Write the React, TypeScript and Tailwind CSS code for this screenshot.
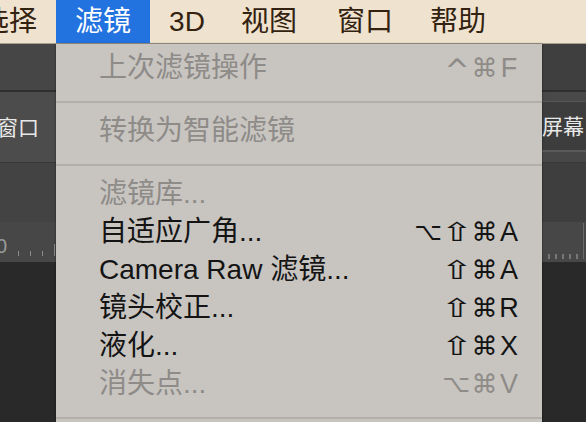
import React from "react";

const CJK = '"Liberation Sans", "Noto Sans CJK SC", sans-serif';
const SYM = '"DejaVu Sans", "Liberation Sans", sans-serif';

type Item = { label: string; keys?: string[]; disabled?: boolean };

function Key({ k, isLetter }: { k: string; isLetter: boolean }) {
  if (isLetter) {
    return (
      <span className="inline-block w-[22px] text-center text-[27px] leading-none" style={{ fontFamily: CJK }}>
        {k}
      </span>
    );
  }
  if (k === "⇧") {
    return (
      <span className="inline-block w-[28px] text-center text-[26px] leading-none" style={{ fontFamily: SYM }}>
        <span className="inline-block scale-x-[1.5]">{k}</span>
      </span>
    );
  }
  if (k === "⌥") {
    return (
      <span className="inline-block w-[30px] text-center text-[24px] leading-none" style={{ fontFamily: SYM }}>
        {k}
      </span>
    );
  }
  if (k === "^") {
    return (
      <span className="inline-block w-[28px] text-center text-[30px] leading-none translate-y-[3px]" style={{ fontFamily: SYM }}>
        {k}
      </span>
    );
  }
  return (
    <span className="inline-block w-[27px] text-center text-[26px] leading-none" style={{ fontFamily: SYM }}>
      {k}
    </span>
  );
}

function Shortcut({ keys, disabled }: { keys: string[]; disabled?: boolean }) {
  return (
    <div className={`flex items-center ${disabled ? "text-[#8e8b88]" : "text-[#141414]"}`}>
      {keys.map((k, i) => (
        <Key key={i} k={k} isLetter={i === keys.length - 1} />
      ))}
    </div>
  );
}

function Row({ item }: { item: Item }) {
  return (
    <div className="h-[38px] flex items-center justify-between pl-[43px] pr-[22px]">
      <span
        className={`text-[28px] leading-none ${item.disabled ? "text-[#8e8b88]" : "text-[#141414]"}`}
        style={{ fontFamily: CJK }}
      >
        {item.label}
      </span>
      {item.keys && <Shortcut keys={item.keys} disabled={item.disabled} />}
    </div>
  );
}

function Sep() {
  return (
    <div className="h-[25px] pt-[14px]">
      <div className="h-[2px] bg-[#b2aeaa]" />
    </div>
  );
}

export default function App() {
  return (
    <div className="w-[586px] h-[422px] overflow-hidden bg-[#292929] flex flex-col" style={{ fontFamily: CJK }}>
      {/* Menu bar */}
      <div className="h-[44px] shrink-0 bg-[#efe2cf] border-b border-[#a99e90] flex items-stretch text-[28px] leading-none text-[#33220f]">
        <div className="w-[56px] flex items-center justify-end pr-[19px] overflow-hidden whitespace-nowrap">
          <span>选择</span>
        </div>
        <div className="w-[94px] flex items-center justify-center bg-[#2272e0] text-white">滤镜</div>
        <div className="w-[74px] flex items-center justify-center">3D</div>
        <div className="w-[90px] flex items-center justify-center">视图</div>
        <div className="w-[102px] flex items-center justify-center">窗口</div>
        <div className="w-[84px] flex items-center justify-center">帮助</div>
      </div>

      {/* Workspace below */}
      <div className="relative flex-1">
        {/* Background panels */}
        <div className="h-[46px] flex">
          <div className="flex-1 bg-[#464646]" />
          <div className="w-[60px] bg-[#3f3f3f]" />
        </div>
        <div className="h-[2px] bg-[#2f2f2f]" />
        <div className="h-[70px] flex">
          <div className="flex-1 bg-[#4c4c4c] flex items-center pl-0">
            <span className="text-[21px] leading-none text-[#e8e8e8] -ml-[3px]">窗口</span>
          </div>
          <div className="w-[44px] flex flex-col">
            <div className="h-[10px] bg-[#494949] border-b border-[#555]" />
            <div className="flex-1 bg-[#3d3d3d] flex items-center">
              <span className="text-[21px] leading-none text-[#e8e8e8] whitespace-nowrap">屏幕</span>
            </div>
            <div className="h-[2px] bg-[#5a5a5a]" />
            <div className="h-[10px] bg-[#474747]" />
          </div>
        </div>
        <div className="h-[1px] bg-[#383838]" />
        <div className="h-[59px] flex">
          <div className="flex-1 bg-[#434343]" />
          <div className="w-[44px] bg-[#3e3e3e]" />
        </div>
        <div className="h-[40px] bg-[#474747] flex justify-between items-end">
          <div className="flex items-end gap-[11px] pb-[6px]">
            <span className="text-[20px] leading-none text-[#9a9a9a] -ml-[4px]">0</span>
            <div className="w-[1px] h-[5px] bg-[#8a8a8a]" />
            <div className="w-[1px] h-[5px] bg-[#8a8a8a]" />
            <div className="w-[1px] h-[5px] bg-[#8a8a8a]" />
            <div className="w-[1px] h-[12px] bg-[#8a8a8a]" />
          </div>
          <div className="flex items-end gap-[5px] pb-[3px] pr-[2px]">
            <div className="w-[2px] h-[5px] bg-[#777]" />
            <div className="w-[2px] h-[5px] bg-[#777]" />
            <div className="w-[2px] h-[5px] bg-[#777]" />
            <div className="w-[2px] h-[5px] bg-[#777]" />
            <div className="w-[2px] h-[5px] bg-[#777]" />
            <div className="w-[1px] h-[36px] bg-[#6a6a6a]" />
          </div>
        </div>
        <div className="flex-1 bg-[#292929]" />

        {/* Dropdown menu */}
        <div className="absolute left-[56px] top-0 w-[486px] h-[420px] bg-[#c8c5c1] pt-[5px] shadow-[0_0_2px_rgba(0,0,0,0.5)]">
          <Row item={{ label: "上次滤镜操作", keys: ["^", "⌘", "F"], disabled: true }} />
          <Sep />
          <Row item={{ label: "转换为智能滤镜", disabled: true }} />
          <Sep />
          <Row item={{ label: "滤镜库...", disabled: true }} />
          <Row item={{ label: "自适应广角...", keys: ["⌥", "⇧", "⌘", "A"] }} />
          <Row item={{ label: "Camera Raw 滤镜...", keys: ["⇧", "⌘", "A"] }} />
          <Row item={{ label: "镜头校正...", keys: ["⇧", "⌘", "R"] }} />
          <Row item={{ label: "液化...", keys: ["⇧", "⌘", "X"] }} />
          <Row item={{ label: "消失点...", keys: ["⌥", "⌘", "V"], disabled: true }} />
          <Sep />
        </div>
      </div>
    </div>
  );
}
